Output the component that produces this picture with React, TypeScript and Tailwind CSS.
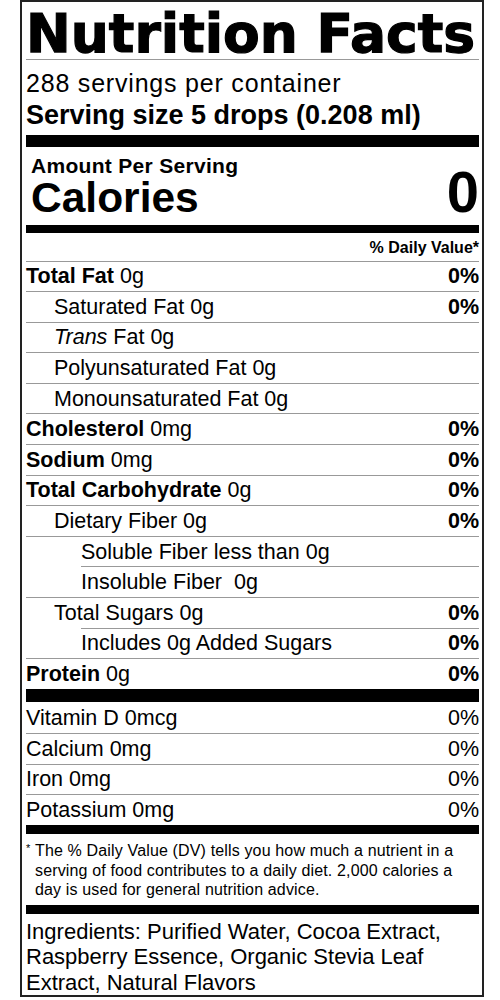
type Row = {
  name: string;
  amount: string;
  dv?: string;
  bold?: boolean;
  italic?: string;
  level?: 0 | 1 | 2;
  shortLine?: boolean;
};

const rows: Row[] = [
  { name: "Total Fat", amount: "0g", dv: "0%", bold: true },
  { name: "Saturated Fat", amount: "0g", dv: "0%", level: 1 },
  { name: "Fat", italic: "Trans", amount: "0g", level: 1 },
  { name: "Polyunsaturated Fat", amount: "0g", level: 1 },
  { name: "Monounsaturated Fat", amount: "0g", level: 1 },
  { name: "Cholesterol", amount: "0mg", dv: "0%", bold: true },
  { name: "Sodium", amount: "0mg", dv: "0%", bold: true },
  { name: "Total Carbohydrate", amount: "0g", dv: "0%", bold: true },
  { name: "Dietary Fiber", amount: "0g", dv: "0%", level: 1 },
  { name: "Soluble Fiber less than", amount: "0g", level: 2 },
  { name: "Insoluble Fiber ", amount: "0g", level: 2, shortLine: true },
  { name: "Total Sugars", amount: "0g", dv: "0%", level: 1 },
  { name: "Includes 0g Added Sugars", amount: "", dv: "0%", level: 2, shortLine: true },
  { name: "Protein", amount: "0g", dv: "0%", bold: true },
];

const vitamins = [
  { name: "Vitamin D", amount: "0mcg" },
  { name: "Calcium", amount: "0mg" },
  { name: "Iron", amount: "0mg" },
  { name: "Potassium", amount: "0mg" },
];

const indent = {
  0: "pl-0",
  1: "pl-[28px]",
  2: "pl-[55px]",
};

const NutrientRow = ({ row }: { row: Row }) => {
  const level = row.level ?? 0;
  return (
    <div
      className={`flex h-[30.6px] items-center justify-between border-t border-[#999] leading-[26px] ${
        row.shortLine ? "ml-[55px] pl-0" : indent[level]
      }`}
    >
      <span className="whitespace-pre">
        {row.italic && <i>{row.italic} </i>}
        {row.bold ? <b>{row.name}</b> : row.name}
        {row.amount ? ` ${row.amount}` : ""}
      </span>
      {row.dv && <b>{row.dv}</b>}
    </div>
  );
};

export default function App() {
  return (
    <div className="h-[1000px] w-[500px] bg-white font-['Liberation_Sans',Arial,sans-serif] text-black">
      <div className="ml-[20px] w-[464px] border-2 border-[#222] pl-[4px] pr-[3px]">
        <h1 className="h-[57.5px] whitespace-nowrap border-b border-[#999] pt-[6.5px] font-['DejaVu_Sans',sans-serif] text-[53.5px] font-bold leading-[50px] [-webkit-text-stroke:1.2px_black]">
          Nutrition Facts
        </h1>
        <div className="mt-[8px] text-[25px] leading-[30px] tracking-[0.8px]">288 servings per container</div>
        <div className="mt-[2px] text-[27px] font-bold leading-[30px]">Serving size 5 drops (0.208 ml)</div>
        <div className="mt-[5.5px] h-[12px] bg-black" />

        <div className="pl-[5px]">
          <div className="mt-[9.5px] text-[21px] font-bold leading-[18px] tracking-[0.3px]">Amount Per Serving</div>
          <div className="mt-[3.5px] flex items-baseline justify-between font-bold">
            <span className="text-[42.5px] leading-[37px]">Calories</span>
            <span className="text-[58px] leading-[28px]">0</span>
          </div>
        </div>
        <div className="mt-[8.5px] h-[8px] bg-black" />

        <div className="mt-[5px] pb-[3px] text-right text-[16px] font-bold leading-[20px]">% Daily Value*</div>

        <div className="text-[21.5px]">
          {rows.map((row) => (
            <NutrientRow key={row.name} row={row} />
          ))}
        </div>
        <div className="h-[13.5px] bg-black" />

        <div className="text-[21.5px] leading-[26px]">
          {vitamins.map((v, i) => (
            <div
              key={v.name}
              className={`flex h-[30.6px] items-center justify-between ${i > 0 ? "border-t border-[#999]" : ""}`}
            >
              <span>
                {v.name} {v.amount}
              </span>
              <span>0%</span>
            </div>
          ))}
        </div>
        <div className="h-[9px] bg-black" />

        <div className="flex pb-[5px] pt-[7.5px] text-[16px] leading-[19.5px] tracking-[0.15px]">
          <span className="w-[9px] shrink-0 text-[11px] leading-[14px]">*</span>
          <p>
            The % Daily Value (DV) tells you how much a nutrient in a
            <br />
            serving of food contributes to a daily diet. 2,000 calories a
            <br />
            day is used for general nutrition advice.
          </p>
        </div>
        <div className="h-[9px] bg-black" />

        <p className="pt-[5.3px] text-[22px] leading-[25.5px]">
          Ingredients: Purified Water, Cocoa Extract,
          <br />
          Raspberry Essence, Organic Stevia Leaf
          <br />
          Extract, Natural Flavors
        </p>
      </div>
    </div>
  );
}
